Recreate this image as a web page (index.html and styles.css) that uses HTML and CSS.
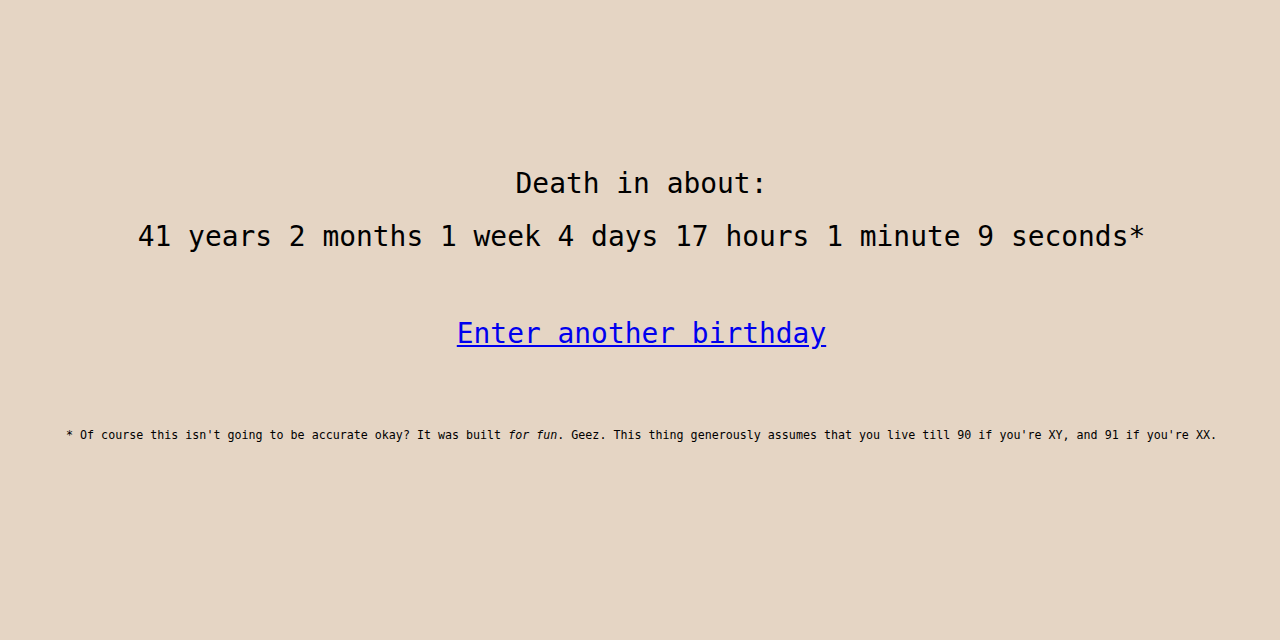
FILE: index.html
```html
<!DOCTYPE html>
<html lang="en">
<head>
<meta charset="utf-8">
<title>Death in about</title>
<link rel="stylesheet" href="styles.css">
</head>
<body>
<main class="page">
  <div class="headline">Death in about:</div>
  <div class="countdown">41 years 2 months 1 week 4 days 17 hours 1 minute 9 seconds*</div>
  <div class="again"><a href="#" class="again-link">Enter another birthday</a></div>
  <p class="note">* Of course this isn't going to be accurate okay? It was built <em>for fun</em>. Geez. This thing generously assumes that you live till 90 if you're XY, and 91 if you're XX.</p>
</main>
</body>
</html>
```
FILE: styles.css
```css
html, body {
  margin: 0;
  padding: 0;
}
body {
  background: #e5d5c4;
  color: #000;
  font-family: "DejaVu Sans Mono", "Liberation Mono", monospace;
  height: 640px;
}
.page {
  padding: 157px 0 0 3px;
  text-align: center;
}
.headline, .countdown {
  font-size: 27.9px;
  line-height: 53px;
  white-space: nowrap;
}
.again {
  margin-top: 44px;
  font-size: 27.9px;
  line-height: 53px;
}
.again-link {
  color: #0000ee;
  text-decoration: underline;
}
.note {
  margin: 65px 0 0;
  font-size: 11.66px;
  line-height: 20px;
  white-space: nowrap;
}
```
